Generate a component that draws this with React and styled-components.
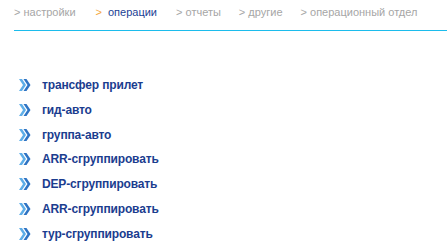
import React from "react";
import styled, { createGlobalStyle } from "styled-components";

const Global = createGlobalStyle`
  html, body { margin: 0; padding: 0; background: #fff; }
  body { font-family: "Liberation Sans", Arial, sans-serif; }
`;

const Page = styled.div`
  padding: 0 0 0 14px;
`;

const Nav = styled.nav`
  display: flex;
  align-items: flex-start;
  height: 30px;
  padding-top: 6px;
  box-sizing: border-box;
  font-size: 11px;
`;

const Rule = styled.div`
  height: 1px;
  background: #1cbcec;
`;

const NavItem = styled.a`
  color: ${(p) => (p.$active ? "#1c3f94" : "#a6a6a6")};
  text-decoration: none;
  margin-right: ${(p) => p.$gap}px;
  white-space: nowrap;
`;

const Arrow = styled.span`
  color: ${(p) => (p.$active ? "#f5a742" : "inherit")};
  margin-right: ${(p) => (p.$active ? "6px" : "0")};
`;

const List = styled.ul`
  list-style: none;
  margin: 45px 0 0 0;
  padding: 0 0 0 5px;
  display: flex;
  flex-direction: column;
  gap: 6.8px;
`;

const Item = styled.li`
  display: flex;
  align-items: center;
  height: 18px;
  gap: 11px;
  font-size: 12px;
  font-weight: bold;
  letter-spacing: -0.15px;
  color: #1b3d8f;
`;

const Icon = () => (
  <svg width="12" height="12" viewBox="0 0 12 12">
    <polygon points="0,0 3,0 7,6 3,12 0,12 4,6" fill="#5eaee8" />
    <polygon points="4.5,0 7.5,0 11.5,6 7.5,12 4.5,12 8.5,6" fill="#2e74c4" />
  </svg>
);

const navItems = [
  { label: "настройки", gap: 20 },
  { label: "операции", gap: 19, active: true },
  { label: "отчеты", gap: 18 },
  { label: "другие", gap: 18 },
  { label: "операционный отдел", gap: 0 },
];

const items = [
  "трансфер прилет",
  "гид-авто",
  "группа-авто",
  "ARR-сгруппировать",
  "DEP-сгруппировать",
  "ARR-сгруппировать",
  "тур-сгруппировать",
];

export default function App() {
  return (
    <Page>
      <Global />
      <Nav>
        {navItems.map((n) => (
          <NavItem key={n.label} href="#" $active={n.active} $gap={n.gap}>
            <Arrow $active={n.active}>{n.active ? ">" : "> "}</Arrow>
            {n.label}
          </NavItem>
        ))}
      </Nav>
      <Rule />
      <List>
        {items.map((t, i) => (
          <Item key={i}>
            <Icon />
            {t}
          </Item>
        ))}
      </List>
    </Page>
  );
}
